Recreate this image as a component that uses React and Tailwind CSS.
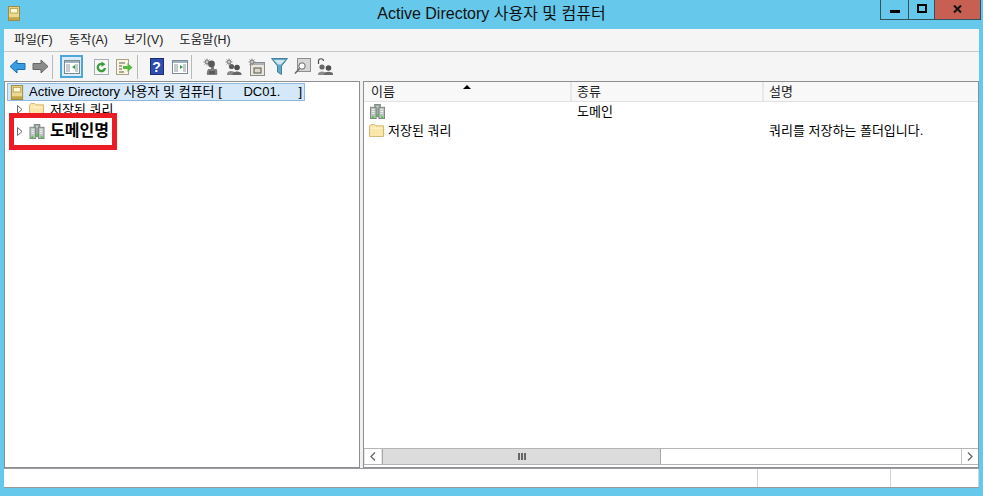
import React from "react";

const FONT = { fontFamily: '"Liberation Sans", "Noto Sans CJK KR", sans-serif' };

function SnapIn({ className }) {
  return (
    <svg className={className} viewBox="0 0 13 16">
      <rect x="0.5" y="0.5" width="12" height="15" fill="#ecd98f" stroke="#9c8538" />
      <rect x="2.5" y="2.5" width="8" height="5" fill="#fdf8d8" stroke="#b8a254" />
      <rect x="1" y="12" width="11" height="3" fill="#c2a64a" />
    </svg>
  );
}

function Folder({ className }) {
  return (
    <svg className={className} viewBox="0 0 16 14">
      <path d="M0.5 13.5V2.5L2 0.5H6L7.5 2H15.5V13.5Z" fill="#fbe7a8" stroke="#cfb26a" />
      <path d="M1.5 4.5H14.5" stroke="#fff6d8" />
    </svg>
  );
}

function Domain({ className }) {
  return (
    <svg className={className} viewBox="0 0 16 16">
      <rect x="5" y="0.5" width="6" height="13" fill="#9fa9a3" stroke="#7c8780" />
      <rect x="0.5" y="3.5" width="6" height="12" fill="#b9c2bc" stroke="#7c8780" />
      <rect x="9.5" y="3.5" width="6" height="12" fill="#b9c2bc" stroke="#7c8780" />
      <path d="M2 6H5M2 8H5M2 10H5M11 6H14M11 8H14M11 10H14M7 3H9" stroke="#f1f4f2" />
      <rect x="2" y="13" width="2" height="2" fill="#48c83c" />
      <rect x="12" y="13" width="2" height="2" fill="#48c83c" />
      <rect x="7" y="11" width="2" height="2" fill="#48c83c" />
    </svg>
  );
}

function Expander({ className }) {
  return (
    <svg className={className} viewBox="0 0 6 9">
      <path d="M0.5 0.5L5 4.5L0.5 8.5Z" fill="#fff" stroke="#6b6b6b" />
    </svg>
  );
}

function Arrow({ color, edge, flip }) {
  return (
    <svg className={`w-[17px] h-[15px] ${flip ? "-scale-x-100" : ""}`} viewBox="0 0 17 15">
      <path d="M1 7.5L8 1V4.5H16V10.5H8V14Z" fill={color} stroke={edge} />
    </svg>
  );
}

function Pane({ arrow }) {
  return (
    <svg className="w-[16px] h-[14px]" viewBox="0 0 16 14">
      <rect x="0.5" y="0.5" width="15" height="13" fill="#fff" stroke="#7b8a92" />
      <rect x="1" y="1" width="14" height="2" fill="#9db2bf" />
      <path d="M2 5H6M2 7H6M2 9H6M2 11H6M11 5H14M11 7H14M11 9H14M11 11H14" stroke="#8b99a1" />
      <path d={arrow} fill="#2f9e3a" />
    </svg>
  );
}

function Refresh() {
  return (
    <svg className="w-[15px] h-[16px]" viewBox="0 0 15 16">
      <rect x="0.5" y="0.5" width="14" height="15" fill="#f7f8f4" stroke="#a7aeb3" />
      <path d="M11 9A3.6 3.6 0 1 1 8.5 5" fill="none" stroke="#3d9c41" strokeWidth="2.4" />
      <path d="M7.5 2.5L11.5 5.2L7.5 8Z" fill="#3d9c41" />
    </svg>
  );
}

function ExportList() {
  return (
    <svg className="w-[17px] h-[16px]" viewBox="0 0 17 16">
      <rect x="0.5" y="0.5" width="12" height="15" fill="#fbf5dc" stroke="#a7a08a" />
      <path d="M3 4H9M3 7H6M3 10H6M3 13H8" stroke="#555f66" />
      <path d="M7 7H11.5V4L16.5 8.5L11.5 13V10H7Z" fill="#57b947" />
    </svg>
  );
}

function Help() {
  return (
    <div className="w-[14px] h-[17px] bg-[#2f4db0] border border-[#1a2c72] flex items-center justify-center text-white text-[14px] font-bold leading-none">
      ?
    </div>
  );
}

function Gear({ x, y }) {
  return (
    <g transform={`translate(${x} ${y})`}>
      <circle r="2.4" fill="#8f8f8f" />
      <path d="M-3.5 0H3.5M0 -3.5V3.5M-2.5 -2.5L2.5 2.5M-2.5 2.5L2.5 -2.5" stroke="#8f8f8f" />
      <circle r="0.9" fill="#e5e5e5" />
    </g>
  );
}

function UserGear() {
  return (
    <svg className="w-[17px] h-[18px]" viewBox="0 0 17 18">
      <Gear x={5} y={4} />
      <circle cx="9.5" cy="6" r="3.4" fill="#595959" />
      <path d="M9 9H12V11H14.5C15.5 12 15.5 16 15 17H5C4.5 15 5 12 6.5 11H9Z" fill="#7d7d7d" />
      <path d="M7 13H13V16H7Z" fill="#5a5a5a" />
    </svg>
  );
}

function GroupGear() {
  return (
    <svg className="w-[17px] h-[18px]" viewBox="0 0 17 18">
      <Gear x={4} y={4} />
      <circle cx="6.5" cy="8.5" r="2.6" fill="#5e5e5e" />
      <path d="M2 16C2 12 10 12 10 16V17H2Z" fill="#8a8a8a" />
      <circle cx="12" cy="9.5" r="2.8" fill="#4f4f4f" />
      <path d="M7.5 16C7.5 12.5 16.5 12.5 16.5 16V17H7.5Z" fill="#666" />
    </svg>
  );
}

function OuGear() {
  return (
    <svg className="w-[17px] h-[18px]" viewBox="0 0 17 18">
      <rect x="2.5" y="4.5" width="14" height="13" fill="#ece8d8" stroke="#8b8b8b" />
      <rect x="3" y="5" width="13" height="2" fill="#a9b4ba" />
      <rect x="6" y="10" width="7" height="5" fill="#dbd8cc" stroke="#555" />
      <Gear x={4} y={4} />
    </svg>
  );
}

function Filter() {
  return (
    <svg className="w-[17px] h-[17px]" viewBox="0 0 17 17">
      <path d="M0.5 0.5H16.5L10.5 8V16.5L6.5 14V8Z" fill="#5ea9c9" stroke="#4a7f99" />
      <path d="M3 2H14L10 6.5H7Z" fill="#cfe6ef" />
    </svg>
  );
}

function FindPage() {
  return (
    <svg className="w-[17px] h-[17px]" viewBox="0 0 17 17">
      <rect x="3.5" y="0.5" width="13" height="13" fill="#d6d6d6" stroke="#8d8d8d" />
      <circle cx="8" cy="8" r="3.2" fill="#fff" stroke="#666" />
      <path d="M5.5 10.5L1 15.5" stroke="#6b6b6b" strokeWidth="1.6" />
    </svg>
  );
}

function GroupArc() {
  return (
    <svg className="w-[17px] h-[18px]" viewBox="0 0 17 18">
      <path d="M1.5 6V3C1.5 0 6.5 0 6.5 3" fill="none" stroke="#4e4e4e" strokeWidth="1.2" />
      <circle cx="5" cy="9" r="2.6" fill="#666" />
      <path d="M1 16C1 12.5 9 12.5 9 16V17H1Z" fill="#8c8c8c" />
      <circle cx="11.5" cy="10" r="2.8" fill="#505050" />
      <path d="M7 16C7 13 16 13 16 16V17H7Z" fill="#6a6a6a" />
    </svg>
  );
}

function Sep() {
  return <div className="w-px h-[24px] bg-[#b9b9b9]" />;
}

function ToolBtn({ children, className = "" }) {
  return <div className={`w-[23px] h-[23px] flex items-center justify-center ${className}`}>{children}</div>;
}

export default function App() {
  const menus = ["파일(F)", "동작(A)", "보기(V)", "도움말(H)"];

  return (
    <div style={FONT} className="relative w-[983px] h-[496px] overflow-hidden bg-[#66c8ea] text-[13px] text-black">
      {/* 타이틀바 */}
      <div className="relative h-[29px] flex items-center justify-center text-[16px] text-[#111]">
        <SnapIn className="absolute left-[8px] top-[6px] w-[12px] h-[15px]" />
        <span className="pb-[1px]">Active Directory 사용자 및 컴퓨터</span>
        <div className="absolute top-0 left-[880px] h-[20px] w-[101px] flex border border-t-0 border-[#33505c]">
          <div className="w-[28px] flex items-center justify-center border-r border-[#33505c]">
            <div className="w-[10px] h-[3px] mt-[3px] bg-black" />
          </div>
          <div className="w-[26px] flex items-center justify-center border-r border-[#33505c]">
            <div className="w-[10px] h-[9px] border-2 border-black mb-[2px]" />
          </div>
          <div className="flex-1 bg-[#c75f52] flex items-center justify-center">
            <svg className="w-[9px] h-[8px] mb-[2px]" viewBox="0 0 9 8">
              <path d="M1 0.5L8 7.5M8 0.5L1 7.5" stroke="#111" strokeWidth="2" />
            </svg>
          </div>
        </div>
      </div>

      <div className="ml-[4px] w-[975px] h-[459px] flex flex-col bg-[#f3f3f3] border-b border-[#999]">
        {/* 메뉴 */}
        <div className="h-[23px] flex items-center bg-[#f5f5f5] border-b border-[#c8c8c8] pl-[10px] gap-[16px] text-[12.4px] text-[#222]">
          {menus.map((m) => (
            <span key={m}>{m}</span>
          ))}
        </div>

        {/* 툴바 */}
        <div className="h-[29px] flex items-center bg-[#f5f5f5] pl-[2px]">
          <ToolBtn><Arrow color="#3b9be0" edge="#1f6fb0" /></ToolBtn>
          <ToolBtn><Arrow color="#8b8b8b" edge="#666" flip /></ToolBtn>
          <Sep />
          <div className="w-[7px]" />
          <ToolBtn className="border-2 border-[#4fa6d8] bg-[#dcecf8]"><Pane arrow="M11 9L8 7L11 5Z" /></ToolBtn>
          <div className="w-[7px]" />
          <ToolBtn><Refresh /></ToolBtn>
          <ToolBtn><ExportList /></ToolBtn>
          <div className="w-px" />
          <Sep />
          <div className="w-[7px]" />
          <ToolBtn><Help /></ToolBtn>
          <ToolBtn><Pane arrow="M8 5L11 7L8 9Z" /></ToolBtn>
          <Sep />
          <div className="w-[7px]" />
          <ToolBtn><UserGear /></ToolBtn>
          <ToolBtn><GroupGear /></ToolBtn>
          <ToolBtn><OuGear /></ToolBtn>
          <ToolBtn><Filter /></ToolBtn>
          <ToolBtn><FindPage /></ToolBtn>
          <ToolBtn><GroupArc /></ToolBtn>
        </div>

        {/* 본문 */}
        <div className="h-[387px] flex gap-[3px] bg-[#f0f0f0]">
          {/* 트리 */}
          <div className="w-[356px] bg-white border border-[#8f8f8f] pt-[1px] pl-[2px]">
            <div className="w-[298px] h-[18px] flex items-center bg-[#d5e8fa] border border-[#8fb8dc]">
              <SnapIn className="shrink-0 ml-[2px] w-[14px] h-[15px]" />
              <span className="ml-[5px] whitespace-pre">Active Directory 사용자 및 컴퓨터 [      DC01.     ]</span>
            </div>
            <div className="h-[17px] flex items-center pl-[10px]">
              <Expander className="w-[6px] h-[9px]" />
              <Folder className="ml-[6px] w-[15px] h-[13px]" />
              <span className="ml-[6px]">저장된 쿼리</span>
            </div>
            <div className="h-[26px] flex items-center pl-[10px]">
              <Expander className="w-[6px] h-[9px]" />
              <Domain className="ml-[6px] w-[16px] h-[15px]" />
              <span className="ml-[5px] text-[16px] font-bold">도메인명</span>
            </div>
          </div>

          {/* 목록 */}
          <div className="w-[616px] flex flex-col bg-white border border-[#8f8f8f]">
            <div className="h-[20px] flex items-center bg-[#f8f8f8] border-b border-[#e2e2e2] text-[#222]">
              <div className="relative w-[208px] h-full flex items-center pl-[7px] border-r-2 border-[#e8e8e8]">
                이름
                <div className="absolute left-[99px] top-[3px] w-0 h-0 border-x-[4px] border-x-transparent border-b-[4px] border-b-black" />
              </div>
              <div className="w-[192px] h-full flex items-center pl-[5px] border-r-2 border-[#e8e8e8]">종류</div>
              <div className="flex-1 h-full flex items-center pl-[5px]">설명</div>
            </div>
            <div className="h-[19px] flex items-center">
              <div className="w-[208px] pl-[6px]"><Domain className="w-[15px] h-[15px]" /></div>
              <div className="pl-[5px]">도메인</div>
            </div>
            <div className="h-[19px] flex items-center">
              <div className="w-[208px] pl-[5px] flex items-center">
                <Folder className="w-[15px] h-[13px]" />
                <span className="ml-[4px]">저장된 쿼리</span>
              </div>
              <div className="w-[192px]" />
              <div className="pl-[5px]">쿼리를 저장하는 폴더입니다.</div>
            </div>
            <div className="flex-1" />
            {/* 가로 스크롤바 */}
            <div className="h-[17px] mb-[2px] flex bg-white border-y border-[#b5b5b5]">
              <div className="w-[18px] flex items-center justify-center border-x border-[#e4e4e4] text-[#666]">
                <svg className="w-[6px] h-[9px]" viewBox="0 0 6 9"><path d="M5 0.5L1 4.5L5 8.5" fill="none" stroke="#666" strokeWidth="1.3" /></svg>
              </div>
              <div className="w-[279px] flex items-center justify-center gap-px bg-[#dcdcdc] border-x border-[#a8a8a8]">
                <div className="w-[2px] h-[7px] bg-[#666]" />
                <div className="w-[2px] h-[7px] bg-[#666]" />
                <div className="w-[2px] h-[7px] bg-[#666]" />
              </div>
              <div className="flex-1" />
              <div className="w-[17px] flex items-center justify-center border-l border-[#c4c4c4]">
                <svg className="w-[6px] h-[9px]" viewBox="0 0 6 9"><path d="M1 0.5L5 4.5L1 8.5" fill="none" stroke="#666" strokeWidth="1.3" /></svg>
              </div>
            </div>
          </div>
        </div>

        {/* 상태바 */}
        <div className="flex-1 flex bg-white border-t border-[#9a9aa2]">
          <div className="w-[754px] border-r border-[#d4d4d4]" />
          <div className="w-[133px] border-r border-[#d4d4d4]" />
          <div className="flex-1 border-r border-[#d4d4d4]" />
        </div>
      </div>

      {/* 빨간 표시 상자 */}
      <div className="absolute left-[9px] top-[113px] w-[108px] h-[37px] border-[5px] border-[#ed1c24]" />
    </div>
  );
}
